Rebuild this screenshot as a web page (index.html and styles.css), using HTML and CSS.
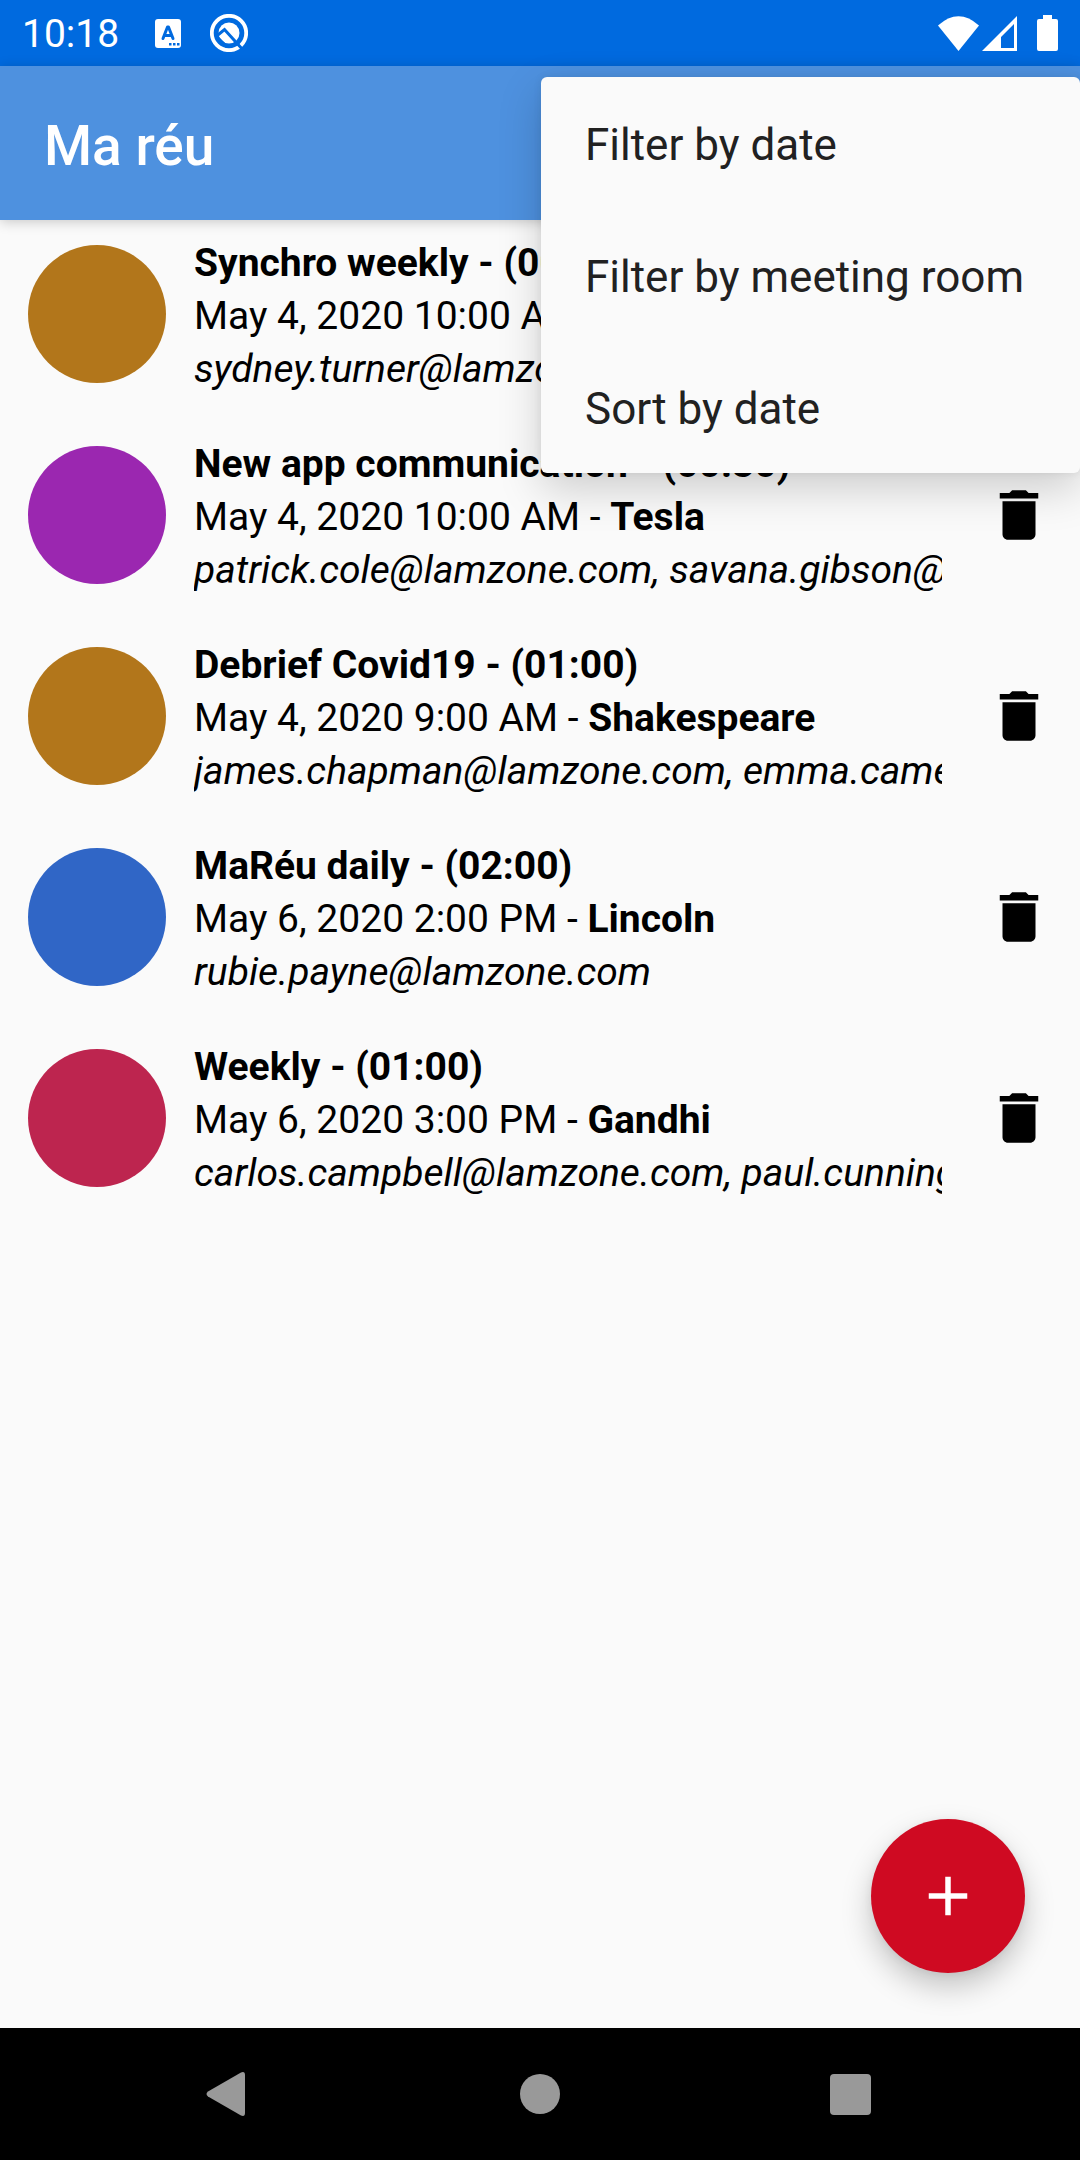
FILE: index.html
```html
<!DOCTYPE html>
<html lang="en">
<head>
<meta charset="utf-8">
<meta name="viewport" content="width=device-width, initial-scale=1">
<title>Ma réu</title>
<link rel="stylesheet" href="styles.css">
</head>
<body>
<svg class="sprite" aria-hidden="true">
  <symbol id="delete" viewBox="0 0 24 24"><path d="M6 19c0 1.100.9 2 2 2h8c1.100 0 2-.9 2-2V7H6v12zM19 4h-3.500l-1-1h-5l-1 1H5v2h14V4z"/></symbol>
</svg>
<div class="screen">
  <div class="status-bar">
    <span class="clock">10:18</span>
    <svg class="notif-keyboard" viewBox="0 0 26 29" aria-hidden="true">
      <rect width="26" height="29" rx="3" fill="#fff"/>
      <path d="M8 19.500L12.500 8h1L18 19.500M9.500 16.500h7" fill="none" stroke="#006adf" stroke-width="3" stroke-linecap="round" stroke-linejoin="round"/>
      <path d="M14 24h2.500v2.500H14zM18 24h2.500v2.500H18zM22 24h2.500v2.500H22z" fill="#006adf"/>
    </svg>
    <svg class="notif-system" viewBox="0 0 38 38" aria-hidden="true">
      <circle cx="19" cy="19" r="17.200" fill="none" stroke="#fff" stroke-width="3.800"/>
      <circle cx="19" cy="19" r="10.500" fill="#fff"/>
      <path d="M6 22.500L14.500 15.500 34 37" fill="none" stroke="#006adf" stroke-width="3"/>
      <path d="M8 24l9 9" fill="none" stroke="#006adf" stroke-width="3"/>
    </svg>
    <div class="signals">
      <svg width="41" height="35" viewBox="0 0 41 35" aria-hidden="true"><path d="M0 9.500Q20.500-9 41 9.500L20.500 35z" fill="#fff"/></svg>
      <svg width="35" height="35" viewBox="0 0 35 35" aria-hidden="true"><path d="M35 0v35H0zM32 8L19 21v11h13z" fill="#fff" fill-rule="evenodd"/></svg>
      <svg class="battery" width="21" height="36" viewBox="0 0 21 36" aria-hidden="true"><path d="M6 0h9v4h4q2 0 2 2v28q0 2-2 2H2q-2 0-2-2V6q0-2 2-2h4z" fill="#fff"/></svg>
    </div>
  </div>
  <header class="app-bar">
    <h1 class="title">Ma réu</h1>
    <div class="menu" role="menu">
      <button class="menu-item" role="menuitem">Filter by date</button>
      <button class="menu-item" role="menuitem">Filter by meeting room</button>
      <button class="menu-item" role="menuitem">Sort by date</button>
    </div>
  </header>
  <main class="content">
    <ul class="meetings">
      <li class="meeting">
        <span class="avatar ochre"></span>
        <div class="details">
          <h2 class="subject">Synchro weekly - (00:30)</h2>
          <p class="line">May 4, 2020 10:00 AM - <b>Tesla</b></p>
          <p class="line people">sydney.turner@lamzone.com</p>
        </div>
        <button class="delete" aria-label="Delete meeting"><svg><use href="#delete"/></svg></button>
      </li>
      <li class="meeting">
        <span class="avatar purple"></span>
        <div class="details">
          <h2 class="subject">New app communication - (00:30)</h2>
          <p class="line">May 4, 2020 10:00 AM - <b>Tesla</b></p>
          <p class="line people">patrick.cole@lamzone.com, savana.gibson@lamzone.com</p>
        </div>
        <button class="delete" aria-label="Delete meeting"><svg><use href="#delete"/></svg></button>
      </li>
      <li class="meeting">
        <span class="avatar ochre"></span>
        <div class="details">
          <h2 class="subject">Debrief Covid19 - (01:00)</h2>
          <p class="line">May 4, 2020 9:00 AM - <b>Shakespeare</b></p>
          <p class="line people">james.chapman@lamzone.com, emma.cameron@lamzone.com</p>
        </div>
        <button class="delete" aria-label="Delete meeting"><svg><use href="#delete"/></svg></button>
      </li>
      <li class="meeting">
        <span class="avatar blue"></span>
        <div class="details">
          <h2 class="subject">MaRéu daily - (02:00)</h2>
          <p class="line">May 6, 2020 2:00 PM - <b>Lincoln</b></p>
          <p class="line people">rubie.payne@lamzone.com</p>
        </div>
        <button class="delete" aria-label="Delete meeting"><svg><use href="#delete"/></svg></button>
      </li>
      <li class="meeting">
        <span class="avatar crimson"></span>
        <div class="details">
          <h2 class="subject">Weekly - (01:00)</h2>
          <p class="line">May 6, 2020 3:00 PM - <b>Gandhi</b></p>
          <p class="line people">carlos.campbell@lamzone.com, paul.cunningham@lamzone.com</p>
        </div>
        <button class="delete" aria-label="Delete meeting"><svg><use href="#delete"/></svg></button>
      </li>
    </ul>
    <button class="fab" aria-label="Add meeting"><svg viewBox="0 0 24 24"><path d="M19 13h-6v6h-2v-6H5v-2h6V5h2v6h6v2z"/></svg></button>
  </main>
  <nav class="nav-bar">
    <button class="nav-button" aria-label="Back"><svg viewBox="0 0 46 46"><path d="M3 20.500L36 1.500Q40 0 40 4V42Q40 46 36 44.500L3 25.500Q0 23 3 20.500z"/></svg></button>
    <button class="nav-button" aria-label="Home"><svg viewBox="0 0 46 46"><circle cx="23" cy="23" r="20"/></svg></button>
    <button class="nav-button" aria-label="Recent apps"><svg viewBox="0 0 46 46"><rect x="1" y="3" width="41" height="41" rx="4"/></svg></button>
  </nav>
</div>
</body>
</html>
```
FILE: styles.css
```css
* {
  box-sizing: border-box;
  margin: 0;
  padding: 0;
}

body {
  background: #fafafa;
  color: #000;
  font-family: Roboto, sans-serif;
  font-size: 39px;
  line-height: 53px;
}

button {
  border: 0;
  background: none;
  color: inherit;
  font: inherit;
}

svg {
  display: block;
}

.sprite {
  display: none;
}

.screen {
  display: flex;
  flex-direction: column;
  min-height: 100vh;
}

.status-bar {
  display: flex;
  align-items: center;
  height: 66px;
  padding: 0 22px;
  background: #006adf;
  color: #fff;
}

.clock {
  padding-top: 2px;
}

.notif-keyboard {
  width: 26px;
  height: 29px;
  margin-left: 36px;
}

.notif-system {
  width: 38px;
  height: 38px;
  margin-left: 29px;
}

.signals {
  display: flex;
  align-items: center;
  gap: 3px;
  margin-left: auto;
}

.battery {
  margin-left: 17px;
}

.app-bar {
  position: relative;
  z-index: 1;
  display: flex;
  align-items: center;
  height: 154px;
  padding: 6px 44px 0;
  background: #4e91df;
  box-shadow: 0 2px 12px rgba(0, 0, 0, 0.2);
}

.title {
  color: #fff;
  font-size: 55px;
  font-weight: 500;
  line-height: 64px;
}

.menu {
  position: absolute;
  top: 11px;
  right: 0;
  display: flex;
  flex-direction: column;
  border-radius: 6px;
  background: #fafafa;
  box-shadow: 0 16px 44px rgba(0, 0, 0, 0.18), 0 0 8px rgba(0, 0, 0, 0.08);
}

.menu-item {
  height: 132px;
  padding: 4px 56px 0 44px;
  color: #212121;
  font-size: 44px;
  text-align: left;
}

.content {
  display: flex;
  flex: 1;
  flex-direction: column;
  justify-content: space-between;
}

.meetings {
  display: flex;
  flex-direction: column;
  gap: 36px;
  padding: 11px 28px 0;
  list-style: none;
}

.meeting {
  display: flex;
  align-items: center;
}

.avatar {
  flex: none;
  width: 138px;
  height: 138px;
  margin-right: 28px;
  border-radius: 50%;
}

.ochre {
  background: #b2761b;
}

.purple {
  background: #9b27b0;
}

.blue {
  background: #3066c6;
}

.crimson {
  background: #bd254f;
}

.details {
  flex: 1;
  min-width: 0;
  padding-top: 6px;
  overflow: hidden;
  white-space: nowrap;
}

.subject {
  font-size: 39px;
  font-weight: 700;
}

.people {
  font-style: italic;
}

.delete {
  flex: none;
  margin-left: 44px;
}

.delete svg {
  width: 66px;
  height: 66px;
}

.fab {
  display: flex;
  align-items: center;
  justify-content: center;
  align-self: flex-end;
  width: 154px;
  height: 154px;
  margin: 55px;
  border-radius: 50%;
  background: #cf0a22;
  box-shadow: 0 14px 30px rgba(0, 0, 0, 0.22), 0 2px 8px rgba(0, 0, 0, 0.06);
}

.fab svg {
  width: 66px;
  height: 66px;
  fill: #fff;
}

.nav-bar {
  display: flex;
  align-items: center;
  justify-content: center;
  gap: 92px;
  height: 132px;
  background: #000;
}

.nav-button {
  display: flex;
  align-items: center;
  justify-content: center;
  width: 220px;
  height: 132px;
}

.nav-button svg {
  width: 46px;
  height: 46px;
  fill: #999;
}
```
